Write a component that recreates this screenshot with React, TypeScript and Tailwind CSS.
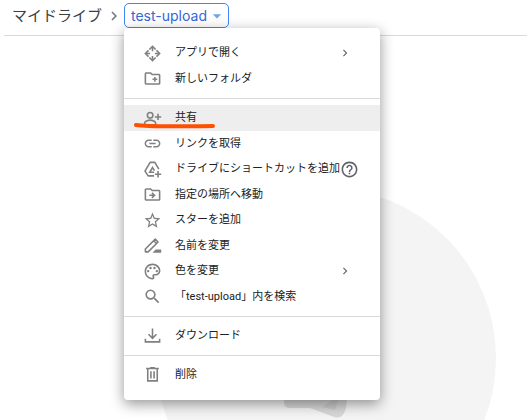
import type { ReactNode } from 'react';
import {
  MdArrowDropDown,
  MdChevronRight,
  MdHelpOutline,
  MdInsertLink,
  MdOutlineCreateNewFolder,
  MdOutlineDriveFileMove,
  MdOutlinePalette,
  MdSearch,
  MdStarBorder,
} from 'react-icons/md';

type MenuItem = {
  label: string;
  icon: ReactNode;
  active?: boolean;
  submenu?: boolean;
  help?: boolean;
};

function LineIcon({ children }: { children: ReactNode }) {
  return (
    <svg viewBox="0 0 24 24" fill="none" stroke="currentColor" strokeWidth="2" aria-hidden="true">
      {children}
    </svg>
  );
}

const openWithIcon = (
  <LineIcon>
    <path d="M8 7l4-4 4 4M8 17l4 4 4-4M7 8l-4 4 4 4M17 8l4 4-4 4" />
    <path d="M12 4v5M12 15v5M4 12h5M15 12h5" />
  </LineIcon>
);

const shareIcon = (
  <LineIcon>
    <circle cx="9" cy="8" r="3.5" />
    <path d="M2 20v-2c0-2.500 4-4 7-4s7 1.500 7 4v2zM19 6v8M15 10h8" />
  </LineIcon>
);

const shortcutIcon = (
  <LineIcon>
    <path d="M14 20H6.500L2.500 14 9 3h6l5 8.500" strokeLinejoin="round" />
    <path d="M14 15.500H8.500L12 9.500l2.500 4M19 14v8M15 18h8" />
  </LineIcon>
);

const renameIcon = (
  <LineIcon>
    <path d="M3 20v-3.500L15.500 4 19 7.500 6.500 20z" strokeLinejoin="round" />
    <path d="M13.500 6l3.500 3.500" />
    <path d="M12 21l4-4h7v4z" fill="currentColor" stroke="none" />
  </LineIcon>
);

const downloadIcon = (
  <LineIcon>
    <path d="M12 3v12M7 10.500l5 5 5-5M3 16v4h18v-4" />
  </LineIcon>
);

const trashIcon = (
  <LineIcon>
    <path d="M4 4.500h16M9 3.500h6M6 5v15h12V5M10 8v9M14 8v9" />
  </LineIcon>
);

const groups: MenuItem[][] = [
  [
    { label: 'アプリで開く', icon: openWithIcon, submenu: true },
    { label: '新しいフォルダ', icon: <MdOutlineCreateNewFolder /> },
  ],
  [
    { label: '共有', icon: shareIcon, active: true },
    { label: 'リンクを取得', icon: <MdInsertLink /> },
    { label: 'ドライブにショートカットを追加', icon: shortcutIcon, help: true },
    { label: '指定の場所へ移動', icon: <MdOutlineDriveFileMove /> },
    { label: 'スターを追加', icon: <MdStarBorder /> },
    { label: '名前を変更', icon: renameIcon },
    { label: '色を変更', icon: <MdOutlinePalette />, submenu: true },
    { label: '「test-upload」内を検索', icon: <MdSearch /> },
  ],
  [{ label: 'ダウンロード', icon: downloadIcon }],
  [{ label: '削除', icon: trashIcon }],
];

function MenuRow({ item }: { item: MenuItem }) {
  return (
    <li role="none" className="relative h-[26px] even:h-[25px] only:h-[25px]">
      <button
        type="button"
        role="menuitem"
        className={`flex h-full w-full items-center pr-7 pl-[19px] text-left whitespace-nowrap ${item.active ? 'bg-[#eeeeee]' : ''}`}
      >
        <span className="mr-[13px] shrink-0 text-[#808080] [&>svg]:size-[19px]">{item.icon}</span>
        <span>{item.label}</span>
        {item.help && <MdHelpOutline className="size-[19px] shrink-0 text-[#5f6368]" />}
        {item.submenu && <MdChevronRight className="ml-auto size-[14px] text-[#666666]" />}
      </button>
      {/* Marker line under the highlighted entry */}
      {item.active && (
        <svg viewBox="0 0 82 6" fill="none" className="absolute bottom-[2px] left-[10px] w-[82px]" aria-hidden="true">
          <path d="M2 2C14 4 30 3.500 79 3" stroke="#ff5000" strokeWidth="4" strokeLinecap="round" />
        </svg>
      )}
    </li>
  );
}

function FolderMenu() {
  return (
    <div
      role="menu"
      className="absolute top-full left-0 z-10 w-64 rounded-[4px] bg-white py-[6px] text-[11px] leading-4 text-[#202124] shadow-[0_4px_14px_rgba(0,0,0,0.42)]"
    >
      {groups.map((group, i) => (
        <ul
          key={i}
          role="group"
          className="border-b border-[#dadada] pt-[6px] pb-[7px] last:border-b-0"
        >
          {group.map((item) => (
            <MenuRow key={item.label} item={item} />
          ))}
        </ul>
      ))}
    </div>
  );
}

export default function App() {
  return (
    <div className="flex h-screen flex-col overflow-hidden bg-white font-['Roboto','Noto_Sans_CJK_JP',sans-serif]">
      <header className="ml-1 flex h-9 shrink-0 items-start border-b border-[#dadada] pt-[3px] pl-2">
        <nav className="flex items-center">
          <a href="#" className="text-[15px] leading-6 text-[#3c4043]">
            マイドライブ
          </a>
          <MdChevronRight className="mr-px ml-[3px] size-[18px] text-[#757575]" />
          <div className="relative">
            <button
              type="button"
              aria-haspopup="menu"
              aria-expanded="true"
              className="flex h-[25px] items-center rounded-[5px] border border-[#4285f4] pr-px pl-1.5 font-['Inter',sans-serif] text-[14px] text-[#3367d6]"
            >
              test-upload
              <MdArrowDropDown className="size-5 text-[#6ea3e8]" />
            </button>
            <FolderMenu />
          </div>
        </nav>
      </header>

      {/* Empty folder illustration */}
      <main className="flex flex-1 justify-center pt-[152px] pl-[125px]">
        <svg viewBox="0 0 340 340" className="size-[340px] shrink-0" aria-hidden="true">
          <circle cx="170" cy="170" r="170" fill="#f4f4f4" />
          <path d="M128 180h66l-4 40q-3 12-12 9l-24-9h-20q-6 0-6-6z" fill="#d8d8d8" />
          <path d="M166 219l18-12-5 15z" fill="#cccccc" />
        </svg>
      </main>
    </div>
  );
}
